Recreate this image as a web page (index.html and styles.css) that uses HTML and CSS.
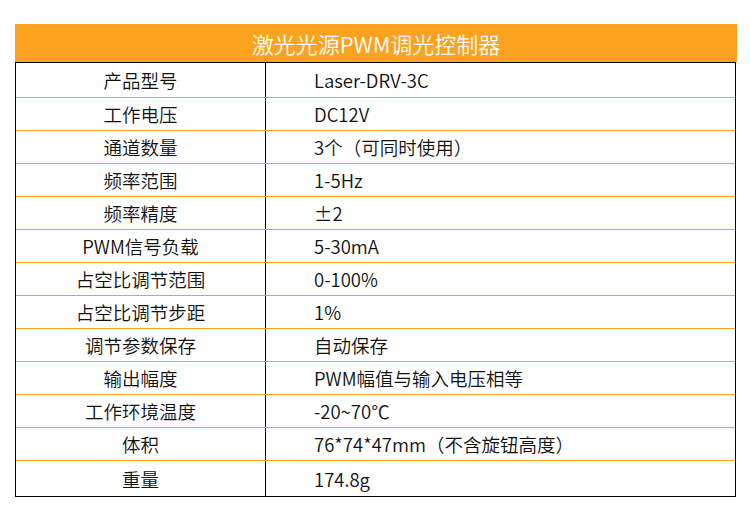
FILE: index.html
```html
<!DOCTYPE html>
<html lang="zh-CN">
<head>
<meta charset="utf-8">
<title>激光光源PWM调光控制器</title>
<link rel="stylesheet" href="styles.css">
</head>
<body>
<div class="sheet">
  <div class="title">激光光源PWM调光控制器</div>
  <div class="table">
    <div class="row"><div class="k">产品型号</div><div class="v">Laser-DRV-3C</div></div>
    <div class="row"><div class="k">工作电压</div><div class="v">DC12V</div></div>
    <div class="row"><div class="k">通道数量</div><div class="v">3个（可同时使用）</div></div>
    <div class="row"><div class="k">频率范围</div><div class="v">1-5Hz</div></div>
    <div class="row"><div class="k">频率精度</div><div class="v">±2</div></div>
    <div class="row"><div class="k">PWM信号负载</div><div class="v">5-30mA</div></div>
    <div class="row"><div class="k">占空比调节范围</div><div class="v">0-100%</div></div>
    <div class="row"><div class="k">占空比调节步距</div><div class="v">1%</div></div>
    <div class="row"><div class="k">调节参数保存</div><div class="v">自动保存</div></div>
    <div class="row"><div class="k">输出幅度</div><div class="v">PWM幅值与输入电压相等</div></div>
    <div class="row"><div class="k">工作环境温度</div><div class="v">-20~70℃</div></div>
    <div class="row"><div class="k">体积</div><div class="v">76*74*47mm（不含旋钮高度）</div></div>
    <div class="row"><div class="k">重量</div><div class="v">174.8g</div></div>
  </div>
</div>
</body>
</html>
```
FILE: styles.css
```css
html, body {
  margin: 0;
  padding: 0;
  background: #ffffff;
}
body {
  font-family: "Noto Sans CJK SC", "Noto Sans", sans-serif;
  color: #111111;
}
.sheet {
  padding: 24px 0 0 15px;
  width: 722px;
}
.title {
  height: 38px;
  background: #fba21e;
  color: #ffffff;
  font-size: 22px;
  font-weight: 350;
  line-height: 38px;
  text-align: center;
}
.table {
  width: 719px;
  border: 1px solid #000000;
}
.row {
  display: flex;
  height: 32px;
  border-bottom: 1px solid #f7a21b;
  font-size: 18.5px;
  font-weight: 350;
}
.row:first-child {
  height: 34px;
}
.row:last-child {
  height: 35px;
  border-bottom: none;
}
.k {
  width: 249px;
  border-right: 1px solid #000000;
  display: flex;
  align-items: center;
  justify-content: center;
}
.v {
  flex: 1;
  display: flex;
  align-items: center;
  padding-left: 48px;
}
```
